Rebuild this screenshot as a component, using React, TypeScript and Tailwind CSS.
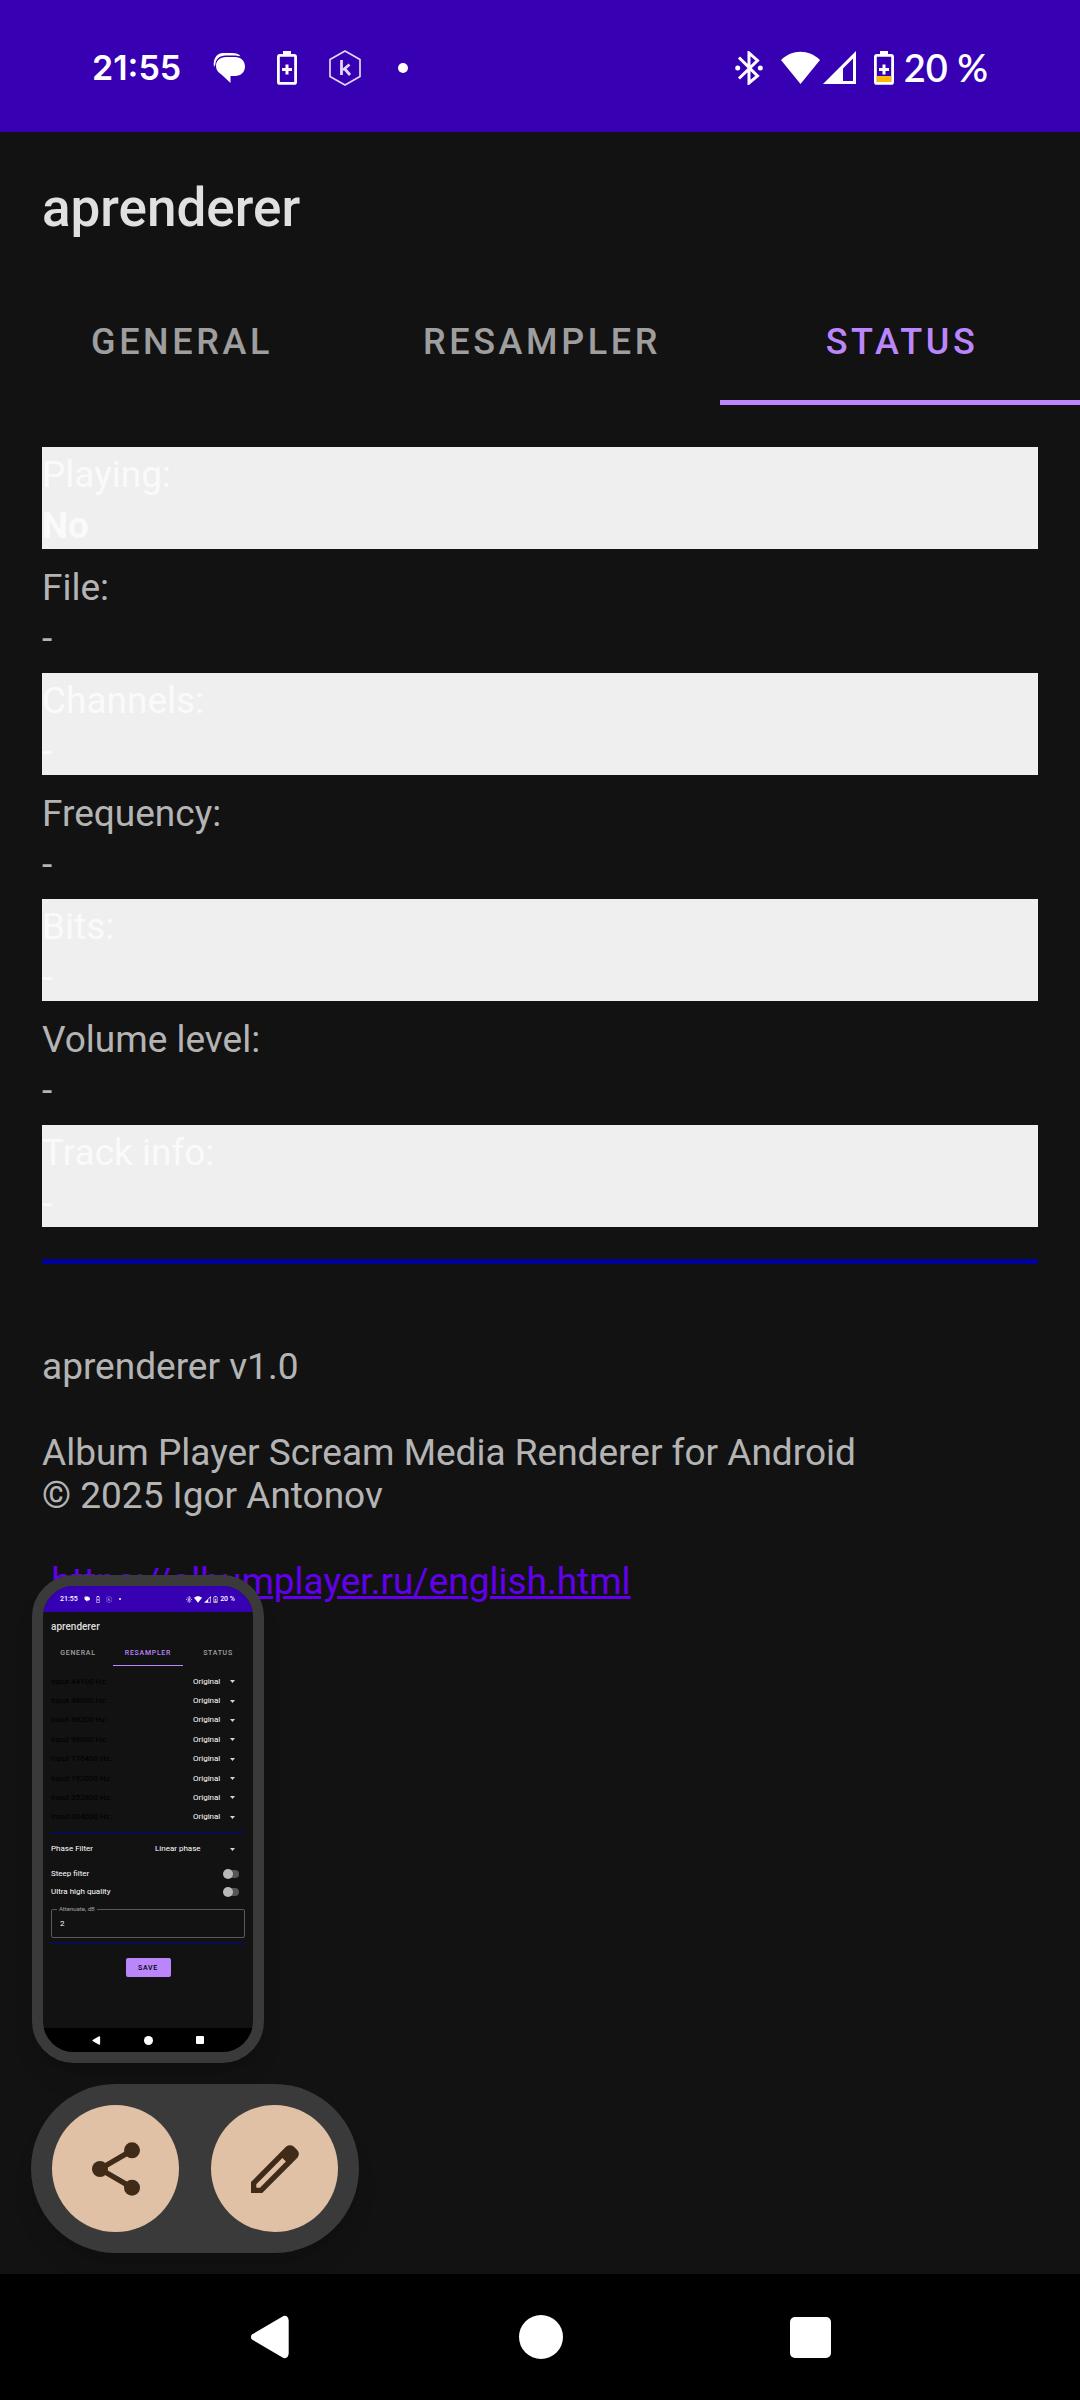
import React, { useState } from 'react';

const tabs = ['GENERAL', 'RESAMPLER', 'STATUS'];

const statusRows = [
  { label: 'Playing:', value: 'No', bold: true },
  { label: 'File:', value: '-' },
  { label: 'Channels:', value: '-' },
  { label: 'Frequency:', value: '-' },
  { label: 'Bits:', value: '-' },
  { label: 'Volume level:', value: '-' },
  { label: 'Track info:', value: '-' },
];

const sampleRates = [44100, 48000, 88200, 96000, 176400, 192000, 352800, 384000];

function ChatIcon({ className }: { className: string }) {
  return (
    <svg className={className} viewBox="0 0 32 32" fill="currentColor">
      <path d="M1 15C-.5 7 4 1 10 1H19C23 1 26 2 27.500 4.200C25.500 3.600 23 3.400 20 3.400H13C6 3.400 2.500 7.500 2.400 12.500Z" />
      <path d="M13 5H22C28 5 32 9 32 14.500S28 24 22 24H17.500V31L9 23C5 20.500 3 18 3 14C3 8.500 7 5 13 5Z" />
    </svg>
  );
}

function BatteryIcon({ className, low }: { className: string; low?: boolean }) {
  return (
    <svg className={className} viewBox="0 0 20 34">
      {low && <rect x="3" y="25" width="14" height="6" fill="#ffb900" />}
      <path d="M6 0H14V4H6Z" fill="currentColor" />
      <rect x="1.400" y="4.400" width="17.200" height="28" rx="1.500" fill="none" stroke="currentColor" strokeWidth="2.800" />
      <path d="M10 13.500V23.500M5 18.500H15" stroke="currentColor" strokeWidth="3" />
    </svg>
  );
}

function HexIcon({ className }: { className: string }) {
  return (
    <svg className={className} viewBox="0 0 32 36" fill="none" stroke="currentColor">
      <path d="M16 1L31 9.500V26.500L16 35L1 26.500V9.500Z" strokeWidth="1.700" strokeLinejoin="round" opacity=".85" />
      <path d="M12.500 10V25M20.500 14.500L14 20M15.500 18.500L21 25" strokeWidth="2.800" opacity=".85" />
    </svg>
  );
}

function DotIcon({ className }: { className: string }) {
  return (
    <svg className={className} viewBox="0 0 20 20" fill="currentColor">
      <circle cx="10" cy="10" r="5" />
    </svg>
  );
}

function BluetoothIcon({ className }: { className: string }) {
  return (
    <svg className={className} viewBox="0 0 28 34" fill="none" stroke="currentColor">
      <path d="M4 6.500L22.500 25L14 32V2L22.500 9.500L4 27.500" strokeWidth="3" />
      <circle cx="2.700" cy="17" r="2.500" fill="currentColor" stroke="none" />
      <circle cx="25.300" cy="17" r="2.500" fill="currentColor" stroke="none" />
    </svg>
  );
}

function WifiIcon({ className }: { className: string }) {
  return (
    <svg className={className} viewBox="0 0 39 34" fill="currentColor">
      <path d="M0 9C11 -2 28 -2 39 9L19.500 33Z" />
    </svg>
  );
}

function SignalIcon({ className }: { className: string }) {
  return (
    <svg className={className} viewBox="0 0 33 34">
      <path d="M33 0V33H0Z" fill="currentColor" />
      <path d="M20 17.500L30 7.500V30H20Z" fill="#3700b3" />
    </svg>
  );
}

function ShareIcon() {
  return (
    <svg className="w-16 h-16" viewBox="0 0 24 24" fill="currentColor">
      <path d="M6 12L18 5M6 12L18 19" stroke="currentColor" strokeWidth="2" />
      <circle cx="18" cy="5" r="3" />
      <circle cx="6" cy="12" r="3" />
      <circle cx="18" cy="19" r="3" />
    </svg>
  );
}

function EditIcon() {
  return (
    <svg className="w-16 h-16" viewBox="0 0 24 24" fill="currentColor" fillRule="evenodd">
      <path d="M3 16.850L16.200 3.600Q17.600 2.500 19 3.600L20.400 5Q21.500 6.400 20.400 7.800L7.200 21H3ZM5 17.700V19H6.350L16.100 9.200L14.750 7.850Z" />
    </svg>
  );
}

function BackGlyph({ className }: { className: string }) {
  return (
    <svg className={className} viewBox="0 0 46 46" fill="currentColor">
      <path d="M3 20.500Q1 23 3 25.500L36 45Q41 46 41.500 40V6Q41 0 36 1Z" />
    </svg>
  );
}

// Dropdown used by the small preview
function MiniSelect({ id, value, className }: { id: string; value: string; className: string }) {
  return (
    <span className="flex items-center">
      <select id={id} className={`appearance-none bg-transparent text-white outline-none ${className}`}>
        <option>{value}</option>
      </select>
      <svg className="w-[5px] h-[3px] mr-[10px] text-neutral-300" viewBox="0 0 10 6" fill="currentColor">
        <path d="M0 0H10L5 6Z" />
      </svg>
    </span>
  );
}

function MiniSwitch({ id, label }: { id: string; label: string }) {
  return (
    <div className="h-[18px] flex items-center justify-between">
      <label htmlFor={id}>{label}</label>
      <input
        id={id}
        type="checkbox"
        className="appearance-none relative w-[14px] h-[8px] mr-[6px] rounded-full bg-[#555555] before:absolute before:-left-[2px] before:-top-px before:size-[10px] before:rounded-full before:bg-[#b9b9b9]"
      />
    </div>
  );
}

function ResamplerPreview() {
  return (
    <div className="w-[232px] h-[488px] ml-px rounded-[42px] border-[11px] border-[#3a3a3a] bg-[#121212] overflow-hidden shadow-xl flex flex-col text-[8px] leading-[10px] text-white">
      <div className="h-[26px] shrink-0 bg-[#3700b3] pl-[17px] pr-[18px] flex items-center justify-between text-[7px] font-medium">
        <div className="flex items-center gap-[6px]">
          <span>21:55</span>
          <ChatIcon className="w-[6px] h-[6px]" />
          <BatteryIcon className="w-[4px] h-[7px]" />
          <HexIcon className="w-[6px] h-[7px]" />
          <DotIcon className="w-[4px] h-[4px]" />
        </div>
        <div className="flex items-center gap-[2px]">
          <BluetoothIcon className="w-[6px] h-[7px]" />
          <WifiIcon className="w-[8px] h-[7px]" />
          <SignalIcon className="w-[7px] h-[7px]" />
          <BatteryIcon className="w-[5px] h-[7px]" low />
          <span>20 %</span>
        </div>
      </div>
      <div className="h-[29px] shrink-0 px-2 flex items-center text-[10px] font-medium text-white/87">aprenderer</div>
      <div className="h-[25px] shrink-0 grid grid-cols-3 text-[7px] font-medium tracking-widest">
        {tabs.map((tab) => (
          <button
            key={tab}
            className={`border-b ${tab === 'RESAMPLER' ? 'border-[#bb86fc] text-[#bb86fc]' : 'border-transparent text-white/60'}`}
          >
            {tab}
          </button>
        ))}
      </div>

      <div className="px-2 flex flex-col">
        <div className="h-[155px] mt-[6px] flex flex-col">
          {sampleRates.map((rate) => (
            <div key={rate} className="flex-1 flex items-center justify-between">
              <label htmlFor={`rate-${rate}`} className="text-black">Input {rate} Hz:</label>
              <MiniSelect id={`rate-${rate}`} value="Original" className="w-[37px]" />
            </div>
          ))}
        </div>
        <hr className="mt-[5px] border-0 h-px bg-[#00009b]" />
        <div className="h-6 mt-1 flex items-center justify-between">
          <label htmlFor="phase">Phase Filter</label>
          <MiniSelect id="phase" value="Linear phase" className="w-[75px]" />
        </div>
        <div className="mt-1">
          <MiniSwitch id="steep" label="Steep filter" />
          <MiniSwitch id="ultra" label="Ultra high quality" />
        </div>
        <div className="relative mt-2">
          <label htmlFor="attenuate" className="absolute left-[6px] -top-[5px] px-[2px] bg-[#121212] text-[6px] text-white/60">
            Attenuate, dB
          </label>
          <input
            id="attenuate"
            defaultValue="2"
            className="block w-full h-[29px] px-2 rounded-[2px] border border-[#5a5a5a] bg-transparent"
          />
        </div>
        <hr className="mt-1 border-0 h-px bg-[#00009b]" />
        <button className="mt-[15px] w-[45px] h-[19px] self-center rounded-[2px] bg-[#bb86fc] text-black text-[7px] font-medium tracking-widest">
          SAVE
        </button>
      </div>

      <div className="h-6 mt-auto shrink-0 bg-black px-[27px] flex items-center justify-around">
        <BackGlyph className="w-[9px] h-[9px]" />
        <span className="size-[9px] rounded-full bg-white" />
        <span className="size-[8px] rounded-[1px] bg-white" />
      </div>
    </div>
  );
}

export default function App() {
  const [activeTab, setActiveTab] = useState('STATUS');

  return (
    <div className="relative min-h-screen flex flex-col bg-[#121212] font-[Roboto,sans-serif] text-[37px] leading-[43px] text-white/70">
      {/* Status bar */}
      <div className="h-[132px] pt-[3px] bg-[#3700b3] text-white px-[92px] flex items-center justify-between">
        <div className="flex items-center gap-8">
          <span className="font-[Inter,sans-serif] text-[34px] font-semibold">21:55</span>
          <ChatIcon className="w-8 h-8" />
          <BatteryIcon className="w-5 h-[34px]" />
          <HexIcon className="w-8 h-9" />
          <DotIcon className="w-5 h-5" />
        </div>
        <div className="flex items-center gap-[18px]">
          <BluetoothIcon className="w-7 h-[34px]" />
          <div className="flex items-center gap-[3px]">
            <WifiIcon className="w-[39px] h-[34px]" />
            <SignalIcon className="w-[33px] h-[34px]" />
          </div>
          <div className="flex items-center gap-[10px]">
            <BatteryIcon className="w-5 h-[34px]" low />
            <span className="font-[Lato,sans-serif] text-[38px] font-semibold">20 %</span>
          </div>
        </div>
      </div>

      {/* App bar */}
      <header className="h-[147px] px-[42px] pt-[4px] flex items-center">
        <h1 className="text-[53px] leading-[62px] font-medium text-white/87">aprenderer</h1>
      </header>
      <nav role="tablist" className="h-[126px] grid grid-cols-3">
        {tabs.map((tab) => (
          <button
            key={tab}
            role="tab"
            aria-selected={activeTab === tab}
            onClick={() => setActiveTab(tab)}
            className={`border-b-[5px] pt-[6px] pl-[4px] text-[36px] font-medium tracking-widest ${
              activeTab === tab ? 'border-[#bb86fc] text-[#bb86fc]' : 'border-transparent text-white/60'
            }`}
          >
            {tab}
          </button>
        ))}
      </nav>

      <main className="px-[42px] pt-[42px]">
        <dl className="flex flex-col gap-[11px]">
          {statusRows.map((row, i) => (
            <div key={row.label} className={i % 2 === 0 ? 'bg-[#efefef]' : ''}>
              <dt className="pt-[6px] pb-[2px]">{row.label}</dt>
              <dd className={`pt-[6px] pb-[2px] ${row.bold ? 'font-bold' : ''}`}>{row.value}</dd>
            </div>
          ))}
        </dl>

        <hr className="mt-8 border-0 h-[5px] bg-[#00009b]" />

        <div className="mt-[81px] flex flex-col gap-[43px]">
          <p>aprenderer v1.0</p>
          <p>
            Album Player Scream Media Renderer for Android
            <br />© 2025 Igor Antonov
          </p>
          <p>
            &nbsp;
            <a href="https://albumplayer.ru/english.html" className="text-[#6200ee] underline">
              https://albumplayer.ru/english.html
            </a>
          </p>
        </div>
      </main>

      {/* Floating screenshot preview with its actions */}
      <div className="absolute left-[31px] bottom-[147px] flex flex-col items-start gap-[21px]">
        <ResamplerPreview />
        <div className="p-[21px] flex gap-8 rounded-full bg-[#3a3a3a] shadow-xl text-[#3f2b17]">
          <button aria-label="Share" className="size-[127px] rounded-full bg-[#e0c1a5] flex items-center justify-center">
            <ShareIcon />
          </button>
          <button aria-label="Edit" className="size-[127px] rounded-full bg-[#e0c1a5] flex items-center justify-center">
            <EditIcon />
          </button>
        </div>
      </div>

      {/* Navigation bar */}
      <nav className="h-[126px] mt-auto bg-black text-white px-[136px] flex items-center justify-around">
        <button aria-label="Back">
          <BackGlyph className="w-11 h-[46px]" />
        </button>
        <button aria-label="Home" className="size-11 rounded-full bg-white" />
        <button aria-label="Recents" className="size-[41px] rounded-[5px] bg-white" />
      </nav>
    </div>
  );
}
